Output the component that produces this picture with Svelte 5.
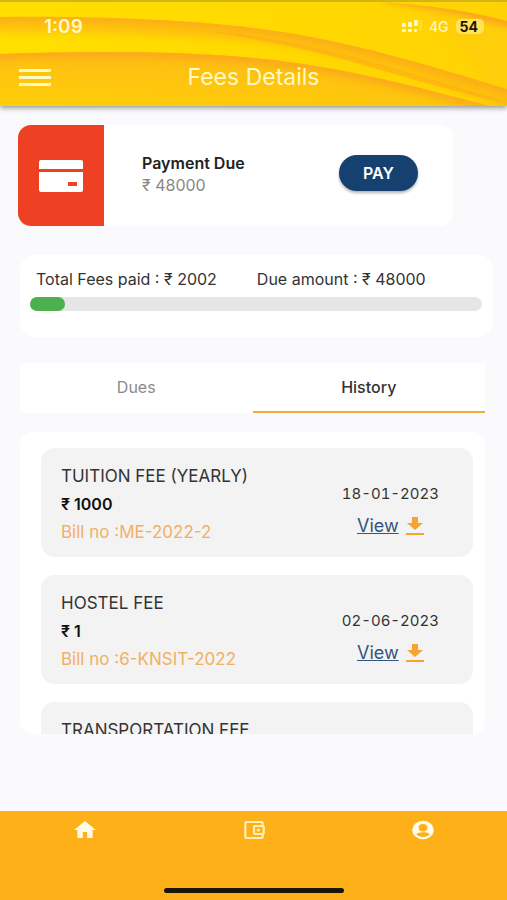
<script>
  let tab = $state("history");

  const paid = 2002;
  const due = 48000;
  const progress = 7.7;

  const history = [
    { title: "TUITION FEE (YEARLY)", amount: 1000, bill: "ME-2022-2", date: "18-01-2023" },
    { title: "HOSTEL FEE", amount: 1, bill: "6-KNSIT-2022", date: "02-06-2023" },
    { title: "TRANSPORTATION FEE" },
  ];
</script>

<div class="app">
  <header>
    <svg class="waves" viewBox="0 0 507 106" preserveAspectRatio="none" aria-hidden="true">
      <defs>
        <linearGradient id="base" x1="0" y1="0" x2="1" y2="0">
          <stop offset="0" stop-color="#ffdf00" />
          <stop offset="0.6" stop-color="#ffd800" />
          <stop offset="1" stop-color="#ffd205" />
        </linearGradient>
        <linearGradient id="low" x1="0.55" y1="0" x2="0.1" y2="1">
          <stop offset="0" stop-color="#fdba15" />
          <stop offset="1" stop-color="#ffcd09" />
        </linearGradient>
        <linearGradient id="band" x1="0" y1="0" x2="1" y2="0">
          <stop offset="0" stop-color="#ffc50e" />
          <stop offset="1" stop-color="#febe10" />
        </linearGradient>
        <filter id="soft" x="-10%" y="-40%" width="120%" height="180%">
          <feGaussianBlur stdDeviation="3" />
        </filter>
        <clipPath id="corner-clip"><path d="M340 0 Q440 3 507 21 V95 C430 70 370 50 300 32Z" /></clipPath>
        <clipPath id="band-clip">
          <path d="M0 17 C90 16 180 19 254 28 C350 40 430 66 507 89 V106 H0Z" />
        </clipPath>
        <clipPath id="low-clip"><path d="M0 54 C90 51 180 51 254 58 C350 67 430 91 490 106 H0Z" /></clipPath>
      </defs>
      <rect width="507" height="106" fill="url(#base)" />

      <g clip-path="url(#corner-clip)">
        <path d="M400 0 Q460 5 520 21 V95 L490 86 Q460 40 400 0Z" fill="#ffcc0a" opacity="0.7" filter="url(#soft)" />
        <path d="M385 -3 Q450 5 515 24" fill="none" stroke="#f9a51a" stroke-width="10" filter="url(#soft)" />
      </g>

      <g clip-path="url(#band-clip)">
        <path
          d="M-9 17 C90 16 180 19 254 28 C350 40 430 66 520 93 V110 H507 C430 78 350 54 254 42 C170 34 80 33 -9 33Z"
          fill="url(#band)"
          filter="url(#soft)"
        />
        <path
          d="M-9 17 C90 16 180 19 254 28 C350 40 430 66 520 93"
          fill="none"
          stroke="#fcae18"
          stroke-width="11"
          filter="url(#soft)"
        />
        <path
          d="M210 31 C270 36 320 48 370 61 C430 78 470 91 515 105 C470 96 420 81 370 67 C310 49 260 40 210 31Z"
          fill="#fbac18"
          opacity="0.6"
        />
      </g>

      <g clip-path="url(#low-clip)">
        <rect y="50" width="507" height="56" fill="url(#low)" />
        <path
          d="M-9 54 C90 51 180 51 254 58 C350 67 430 91 500 109"
          fill="none"
          stroke="#faa61a"
          stroke-width="11"
          opacity="0.8"
          filter="url(#soft)"
        />
      </g>
      <rect width="507" height="2" fill="#d3b51a" />
    </svg>

    <div class="status">
      <span class="time">1:09</span>
      <span class="network">
        <svg width="20" height="14" viewBox="0 0 20 14" fill="#fff9c4" aria-hidden="true">
          <rect x="0" y="4" width="4" height="4" rx="1" />
          <rect x="6" y="3" width="4" height="5" rx="1" />
          <rect x="12" y="1" width="4" height="6" rx="1" />
          <rect x="0" y="10" width="4" height="3" rx="1" />
          <rect x="6" y="10" width="4" height="3" rx="1" />
          <rect x="12" y="10" width="3" height="3" rx="1" />
          <rect x="17" y="1" width="3" height="11" rx="1" opacity="0.2" />
        </svg>
        <span>4G</span>
        <span class="battery">54</span>
      </span>
    </div>

    <div class="bar">
      <button class="menu" aria-label="Menu"><i></i><i></i><i></i></button>
      <h1>Fees Details</h1>
    </div>
  </header>

  <main>
    <section class="payment">
      <div class="badge">
        <svg width="44" height="34" viewBox="0 0 44 34" aria-hidden="true">
          <path d="M2 1h40q2 0 2 2v7H0V3q0-2 2-2Z" fill="#fff" />
          <path d="M0 13h44v18q0 2-2 2H2q-2 0-2-2Z" fill="#fff" />
          <rect x="29" y="23" width="9" height="4" fill="#ee4023" />
        </svg>
      </div>
      <div class="info">
        <strong>Payment Due</strong>
        <span>₹ {due}</span>
      </div>
      <button class="pay">PAY</button>
    </section>

    <section class="summary">
      <div class="totals">
        <span>Total Fees paid : ₹ {paid}</span>
        <span>Due amount : ₹ {due}</span>
      </div>
      <div class="track" role="progressbar" aria-label="Fees paid" aria-valuenow={progress}>
        <div class="fill" style="width: {progress}%"></div>
      </div>
    </section>

    <div class="tabs" role="tablist">
      <button role="tab" aria-selected={tab === "dues"} class:active={tab === "dues"} onclick={() => (tab = "dues")}>
        Dues
      </button>
      <button role="tab" aria-selected={tab === "history"} class:active={tab === "history"} onclick={() => (tab = "history")}>
        History
      </button>
    </div>

    <div class="list">
      {#each history as fee}
        <article>
          <div class="fee">
            <span>{fee.title}</span>
            {#if fee.bill}
              <strong>₹ {fee.amount}</strong>
              <span class="bill">Bill no :{fee.bill}</span>
            {/if}
          </div>
          {#if fee.date}
            <div class="receipt">
              <span>{fee.date}</span>
              <a href="#view">
                <span>View</span>
                <svg width="18" height="18" viewBox="0 0 18 18" fill="#f5a331" aria-label="Download">
                  <path d="M6 0h6v6h5l-8 7-8-7h5Z" />
                  <rect y="16" width="18" height="2" />
                </svg>
              </a>
            </div>
          {/if}
        </article>
      {/each}
    </div>
  </main>

  <nav>
    <div class="links">
      <a href="#home" aria-label="Home">
        <svg width="26" height="24" viewBox="0 0 24 24" preserveAspectRatio="none" fill="#fffbe8">
          <path d="M10 20v-6h4v6h5v-8h3L12 3 2 12h3v8z" />
        </svg>
      </a>
      <a href="#wallet" aria-label="Wallet">
        <svg width="26" height="24" viewBox="0 0 24 24" preserveAspectRatio="none" fill="#fff0b8">
          <path
            fill-rule="evenodd"
            d="M5 3h14a2 2 0 0 1 2 2v2.300a2 2 0 0 1 1 1.700v6a2 2 0 0 1-1 1.700V19a2 2 0 0 1-2 2H5a2 2 0 0 1-2-2V5a2 2 0 0 1 2-2Zm0 2v14h14v-2h-6a2 2 0 0 1-2-2V9a2 2 0 0 1 2-2h6V5Zm8 4v6h7V9Z"
          />
          <circle cx="16" cy="12" r="1.500" />
        </svg>
      </a>
      <a href="#profile" aria-label="Profile">
        <svg width="26" height="22" viewBox="0 0 24 24" preserveAspectRatio="none" fill="#fffbe8">
          <path
            fill-rule="evenodd"
            d="M12 2a10 10 0 1 0 0 20 10 10 0 0 0 0-20Zm0 3.500a4 4 0 1 1 0 8 4 4 0 0 1 0-8Zm0 14c-2.500 0-4.700-1-6-2.700.1-1.500 4-2.300 6-2.300s5.900.8 6 2.300c-1.300 1.700-3.500 2.700-6 2.700Z"
          />
        </svg>
      </a>
    </div>
    <div class="indicator"></div>
  </nav>
</div>

<style>
  :global(body) {
    margin: 0;
  }

  .app {
    height: 100vh;
    display: flex;
    flex-direction: column;
    background: #fafafc;
    color: #333;
    font-family: Inter, "Noto Sans", sans-serif;
    font-size: 16px;
  }
  button {
    border: 0;
    padding: 0;
    background: none;
    font: inherit;
    cursor: pointer;
  }

  header {
    position: relative;
    flex-shrink: 0;
    padding-bottom: 4px;
    box-shadow: 0 2px 5px rgba(0, 0, 0, 0.4);
    color: #fff9c4;
  }
  .waves {
    position: absolute;
    inset: 0;
    width: 100%;
    height: 100%;
  }
  .status,
  .bar {
    position: relative;
    display: flex;
    align-items: center;
  }
  .status {
    height: 52px;
    padding: 0 23px 0 44px;
    justify-content: space-between;
  }
  .time {
    font-size: 19px;
    font-weight: 600;
  }
  .network {
    display: flex;
    align-items: center;
    gap: 7px;
    font-size: 14px;
    font-weight: 500;
  }
  .battery {
    padding: 0 6px 0 4px;
    border-radius: 5px;
    line-height: 15px;
    background: #ffe35c;
    color: #1c1600;
    font-weight: 700;
  }
  .bar {
    height: 50px;
    justify-content: center;
  }
  .menu {
    position: absolute;
    left: 19px;
    display: flex;
    flex-direction: column;
    gap: 4px;
  }
  .menu i {
    width: 32px;
    height: 3px;
    background: #fff9c4;
  }
  h1 {
    margin: 0;
    font-size: 23px;
    font-weight: 400;
  }

  main {
    flex: 1;
    min-height: 0;
    display: flex;
    flex-direction: column;
    padding: 19px 22px 77px 20px;
  }
  .payment {
    display: flex;
    align-items: center;
    margin: 0 32px 0 -2px;
    border-radius: 13px;
    background: #fff;
  }
  .badge {
    width: 86px;
    height: 101px;
    display: flex;
    align-items: center;
    justify-content: center;
    border-radius: 13px 0 0 13px;
    background: #ee4023;
  }
  .info {
    flex: 1;
    display: flex;
    flex-direction: column;
    padding: 0 0 4px 38px;
    line-height: 22px;
  }
  .info strong {
    font-weight: 600;
    color: #222;
  }
  .info span {
    color: #888;
  }
  .pay {
    width: 79px;
    height: 36px;
    margin: 0 35px 6px 0;
    border-radius: 18px;
    background: #15406f;
    box-shadow: 0 2px 3px rgba(0, 0, 0, 0.3);
    color: #fff;
    font-weight: 600;
  }

  .summary {
    margin: 29px -8px 0 0;
    padding: 12px 11px 26px 10px;
    border-radius: 15px;
    background: #fff;
  }
  .totals {
    display: flex;
    gap: 40px;
    padding-left: 6px;
    line-height: 24px;
  }
  .track {
    height: 14px;
    margin-top: 6px;
    border-radius: 7px;
    background: #e6e6e6;
  }
  .fill {
    height: 100%;
    border-radius: 7px;
    background: #4caf50;
  }

  .tabs {
    display: flex;
    margin-top: 26px;
    background: #fff;
  }
  .tabs button {
    flex: 1;
    height: 50px;
    border-bottom: 2px solid transparent;
    color: #8a8a8a;
  }
  .tabs .active {
    border-color: #f0a93a;
    color: #333;
    font-weight: 500;
  }

  .list {
    flex: 1;
    min-height: 0;
    display: flex;
    flex-direction: column;
    gap: 18px;
    margin-top: 19px;
    padding: 16px 12px 0 21px;
    border-radius: 12px;
    overflow-y: auto;
    scrollbar-width: none;
    background: #fff;
  }
  article {
    flex-shrink: 0;
    min-height: 109px;
    box-sizing: border-box;
    display: flex;
    justify-content: space-between;
    padding: 14px 34px 11px 20px;
    border-radius: 14px;
    background: #f3f3f3;
  }
  .fee {
    display: flex;
    flex-direction: column;
    font-size: 17px;
    line-height: 28px;
  }
  .fee strong {
    font-size: 16px;
    font-weight: 600;
    color: #111;
  }
  .bill {
    color: #f2b063;
  }
  .receipt {
    display: flex;
    flex-direction: column;
    align-items: center;
    justify-content: flex-end;
    padding-bottom: 4px;
    font-size: 15px;
    line-height: 32px;
    font-variant-numeric: tabular-nums;
  }
  .receipt a {
    display: flex;
    align-items: center;
    gap: 7px;
    color: #35547e;
    font-size: 18px;
    text-decoration: none;
  }
  .receipt a span {
    text-decoration: underline;
  }

  nav {
    height: 89px;
    flex-shrink: 0;
    box-sizing: border-box;
    display: flex;
    flex-direction: column;
    align-items: center;
    justify-content: space-between;
    padding: 6px 0 7px;
    background: #feb019;
  }
  .links {
    width: 100%;
    display: flex;
  }
  .links a {
    flex: 1;
    height: 25px;
    display: flex;
    align-items: center;
    justify-content: center;
  }
  .indicator {
    width: 180px;
    height: 5px;
    border-radius: 3px;
    background: #1b1508;
  }
</style>
